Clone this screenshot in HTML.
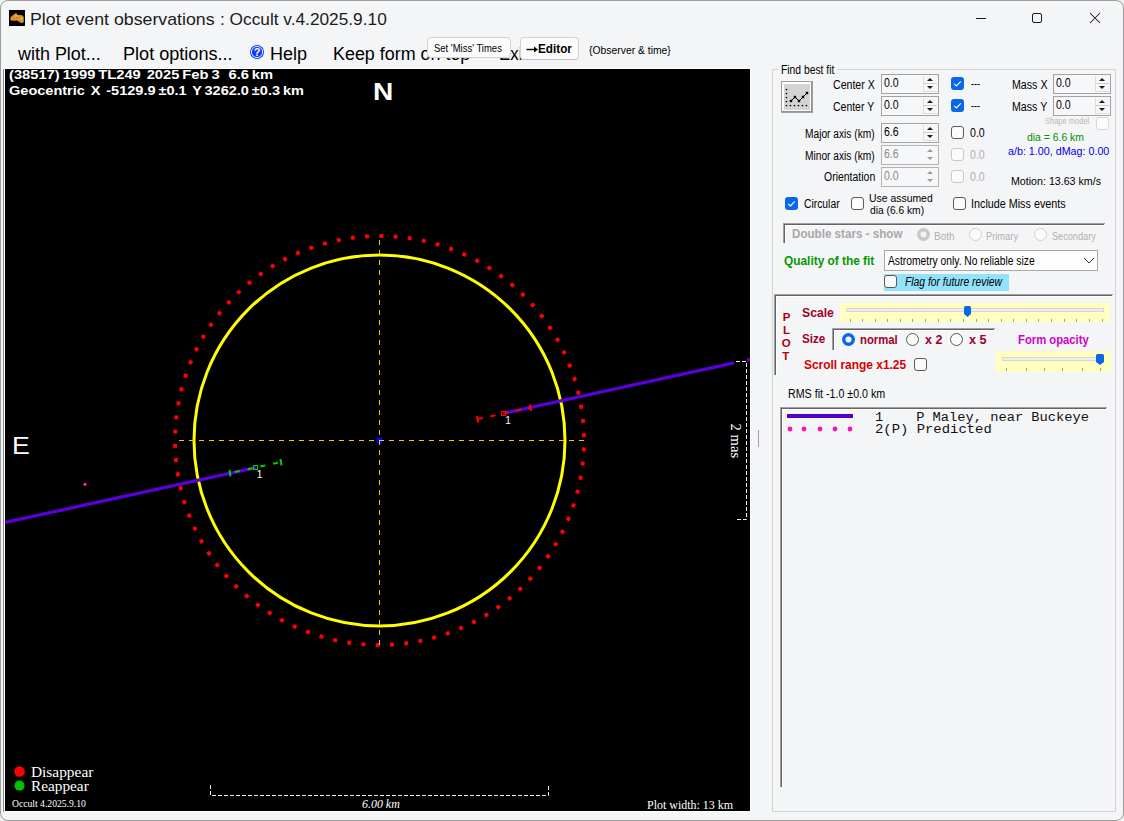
<!DOCTYPE html><html><head><meta charset="utf-8"><style>html,body{margin:0;padding:0;overflow:hidden}body{width:1124px;height:821px;position:relative;background:#f0f0f0}</style></head><body>
<div style="position:absolute;left:0;top:0;width:1124px;height:821px;box-sizing:border-box;border:1px solid #9c9c9c;border-radius:8px;background:#f4f5f7"></div>
<svg style="position:absolute;left:9px;top:10px" width="16" height="16"><rect width="16" height="16" fill="#000"/><path d="M1.2 8.2 Q2 6.5 3.9 5.3 Q5.5 4 7 3.1 Q8 3.5 8.5 5.1 Q10 4.8 11.7 5.1 Q13.3 5.2 13.9 5.8 Q14.8 6.8 14.8 7.8 L14.8 11.9 Q14.2 12.9 13.1 12.9 Q12 12.9 11.2 12.6 Q10.2 11.9 9.5 11.2 Q8.5 10.5 7.8 10.4 Q6 10.6 4.1 10.7 Q2 10.6 1.4 10.2 Z" fill="#d4922c"/><ellipse cx="7.5" cy="6.5" rx="2.5" ry="1.8" fill="#e0aa30"/><circle cx="7.5" cy="7.5" r="0.8" fill="#ff4a18"/><circle cx="12.4" cy="8.5" r="0.9" fill="#c8d838"/></svg>
<div style="position:absolute;left:976px;top:18px;width:10px;height:1px;background:#1a1a1a"></div>
<svg style="position:absolute;left:1031px;top:12px" width="12" height="12"><rect x="1.5" y="1.5" width="9" height="9" rx="1.5" fill="none" stroke="#1a1a1a" stroke-width="1"/></svg>
<svg style="position:absolute;left:1089px;top:12px" width="12" height="12"><path d="M1 1 L11 11 M11 1 L1 11" stroke="#1a1a1a" stroke-width="1.05"/></svg>
<svg style="position:absolute;left:249px;top:44px" width="16" height="16"><circle cx="8" cy="8" r="7" fill="#0a3cf0"/><circle cx="8" cy="8" r="5.6" fill="none" stroke="#fff" stroke-width="0.9"/><text x="8" y="12" text-anchor="middle" font-family="Liberation Sans" font-weight="700" font-size="11" fill="#fff">?</text></svg>
<div style="position:absolute;left:3px;top:69px;width:1px;height:743px;background:#8a8a8a"></div>
<div style="position:absolute;left:4px;top:68px;width:747px;height:744px;background:#ffffff"></div>
<svg style="position:absolute;left:5px;top:69px" width="745" height="742" viewBox="5 69 745 742">
<rect x="5" y="69" width="745" height="742" fill="#000"/>
<circle cx="379.5" cy="440.5" r="185.5" fill="none" stroke="#ffff00" stroke-width="3"/>
<rect x="-2" y="-2" width="4" height="4" rx="0.9" fill="#ff0000" transform="translate(583.81 449.42) rotate(2.5)"/>
<rect x="-2" y="-2" width="4" height="4" rx="0.9" fill="#ff0000" transform="translate(582.69 463.65) rotate(6.5)"/>
<rect x="-2" y="-2" width="4" height="4" rx="0.9" fill="#ff0000" transform="translate(580.58 477.77) rotate(10.5)"/>
<rect x="-2" y="-2" width="4" height="4" rx="0.9" fill="#ff0000" transform="translate(577.49 491.70) rotate(14.5)"/>
<rect x="-2" y="-2" width="4" height="4" rx="0.9" fill="#ff0000" transform="translate(573.43 505.39) rotate(18.5)"/>
<rect x="-2" y="-2" width="4" height="4" rx="0.9" fill="#ff0000" transform="translate(568.43 518.76) rotate(22.5)"/>
<rect x="-2" y="-2" width="4" height="4" rx="0.9" fill="#ff0000" transform="translate(562.51 531.75) rotate(26.5)"/>
<rect x="-2" y="-2" width="4" height="4" rx="0.9" fill="#ff0000" transform="translate(555.70 544.29) rotate(30.5)"/>
<rect x="-2" y="-2" width="4" height="4" rx="0.9" fill="#ff0000" transform="translate(548.03 556.33) rotate(34.5)"/>
<rect x="-2" y="-2" width="4" height="4" rx="0.9" fill="#ff0000" transform="translate(539.54 567.80) rotate(38.5)"/>
<rect x="-2" y="-2" width="4" height="4" rx="0.9" fill="#ff0000" transform="translate(530.27 578.66) rotate(42.5)"/>
<rect x="-2" y="-2" width="4" height="4" rx="0.9" fill="#ff0000" transform="translate(520.27 588.84) rotate(46.5)"/>
<rect x="-2" y="-2" width="4" height="4" rx="0.9" fill="#ff0000" transform="translate(509.58 598.30) rotate(50.5)"/>
<rect x="-2" y="-2" width="4" height="4" rx="0.9" fill="#ff0000" transform="translate(498.25 606.99) rotate(54.5)"/>
<rect x="-2" y="-2" width="4" height="4" rx="0.9" fill="#ff0000" transform="translate(486.35 614.86) rotate(58.5)"/>
<rect x="-2" y="-2" width="4" height="4" rx="0.9" fill="#ff0000" transform="translate(473.93 621.89) rotate(62.5)"/>
<rect x="-2" y="-2" width="4" height="4" rx="0.9" fill="#ff0000" transform="translate(461.04 628.04) rotate(66.5)"/>
<rect x="-2" y="-2" width="4" height="4" rx="0.9" fill="#ff0000" transform="translate(447.76 633.27) rotate(70.5)"/>
<rect x="-2" y="-2" width="4" height="4" rx="0.9" fill="#ff0000" transform="translate(434.15 637.56) rotate(74.5)"/>
<rect x="-2" y="-2" width="4" height="4" rx="0.9" fill="#ff0000" transform="translate(420.27 640.89) rotate(78.5)"/>
<rect x="-2" y="-2" width="4" height="4" rx="0.9" fill="#ff0000" transform="translate(406.19 643.25) rotate(82.5)"/>
<rect x="-2" y="-2" width="4" height="4" rx="0.9" fill="#ff0000" transform="translate(391.98 644.62) rotate(86.5)"/>
<rect x="-2" y="-2" width="4" height="4" rx="0.9" fill="#ff0000" transform="translate(377.72 644.99) rotate(90.5)"/>
<rect x="-2" y="-2" width="4" height="4" rx="0.9" fill="#ff0000" transform="translate(363.46 644.37) rotate(94.5)"/>
<rect x="-2" y="-2" width="4" height="4" rx="0.9" fill="#ff0000" transform="translate(349.27 642.75) rotate(98.5)"/>
<rect x="-2" y="-2" width="4" height="4" rx="0.9" fill="#ff0000" transform="translate(335.24 640.15) rotate(102.5)"/>
<rect x="-2" y="-2" width="4" height="4" rx="0.9" fill="#ff0000" transform="translate(321.42 636.58) rotate(106.5)"/>
<rect x="-2" y="-2" width="4" height="4" rx="0.9" fill="#ff0000" transform="translate(307.88 632.05) rotate(110.5)"/>
<rect x="-2" y="-2" width="4" height="4" rx="0.9" fill="#ff0000" transform="translate(294.70 626.59) rotate(114.5)"/>
<rect x="-2" y="-2" width="4" height="4" rx="0.9" fill="#ff0000" transform="translate(281.92 620.22) rotate(118.5)"/>
<rect x="-2" y="-2" width="4" height="4" rx="0.9" fill="#ff0000" transform="translate(269.62 612.97) rotate(122.5)"/>
<rect x="-2" y="-2" width="4" height="4" rx="0.9" fill="#ff0000" transform="translate(257.86 604.89) rotate(126.5)"/>
<rect x="-2" y="-2" width="4" height="4" rx="0.9" fill="#ff0000" transform="translate(246.69 596.00) rotate(130.5)"/>
<rect x="-2" y="-2" width="4" height="4" rx="0.9" fill="#ff0000" transform="translate(236.16 586.36) rotate(134.5)"/>
<rect x="-2" y="-2" width="4" height="4" rx="0.9" fill="#ff0000" transform="translate(226.34 576.01) rotate(138.5)"/>
<rect x="-2" y="-2" width="4" height="4" rx="0.9" fill="#ff0000" transform="translate(217.26 564.99) rotate(142.5)"/>
<rect x="-2" y="-2" width="4" height="4" rx="0.9" fill="#ff0000" transform="translate(208.97 553.37) rotate(146.5)"/>
<rect x="-2" y="-2" width="4" height="4" rx="0.9" fill="#ff0000" transform="translate(201.51 541.20) rotate(150.5)"/>
<rect x="-2" y="-2" width="4" height="4" rx="0.9" fill="#ff0000" transform="translate(194.92 528.54) rotate(154.5)"/>
<rect x="-2" y="-2" width="4" height="4" rx="0.9" fill="#ff0000" transform="translate(189.23 515.45) rotate(158.5)"/>
<rect x="-2" y="-2" width="4" height="4" rx="0.9" fill="#ff0000" transform="translate(184.46 501.99) rotate(162.5)"/>
<rect x="-2" y="-2" width="4" height="4" rx="0.9" fill="#ff0000" transform="translate(180.65 488.24) rotate(166.5)"/>
<rect x="-2" y="-2" width="4" height="4" rx="0.9" fill="#ff0000" transform="translate(177.80 474.25) rotate(170.5)"/>
<rect x="-2" y="-2" width="4" height="4" rx="0.9" fill="#ff0000" transform="translate(175.94 460.10) rotate(174.5)"/>
<rect x="-2" y="-2" width="4" height="4" rx="0.9" fill="#ff0000" transform="translate(175.07 445.85) rotate(178.5)"/>
<rect x="-2" y="-2" width="4" height="4" rx="0.9" fill="#ff0000" transform="translate(175.19 431.58) rotate(182.5)"/>
<rect x="-2" y="-2" width="4" height="4" rx="0.9" fill="#ff0000" transform="translate(176.31 417.35) rotate(186.5)"/>
<rect x="-2" y="-2" width="4" height="4" rx="0.9" fill="#ff0000" transform="translate(178.42 403.23) rotate(190.5)"/>
<rect x="-2" y="-2" width="4" height="4" rx="0.9" fill="#ff0000" transform="translate(181.51 389.30) rotate(194.5)"/>
<rect x="-2" y="-2" width="4" height="4" rx="0.9" fill="#ff0000" transform="translate(185.57 375.61) rotate(198.5)"/>
<rect x="-2" y="-2" width="4" height="4" rx="0.9" fill="#ff0000" transform="translate(190.57 362.24) rotate(202.5)"/>
<rect x="-2" y="-2" width="4" height="4" rx="0.9" fill="#ff0000" transform="translate(196.49 349.25) rotate(206.5)"/>
<rect x="-2" y="-2" width="4" height="4" rx="0.9" fill="#ff0000" transform="translate(203.30 336.71) rotate(210.5)"/>
<rect x="-2" y="-2" width="4" height="4" rx="0.9" fill="#ff0000" transform="translate(210.97 324.67) rotate(214.5)"/>
<rect x="-2" y="-2" width="4" height="4" rx="0.9" fill="#ff0000" transform="translate(219.46 313.20) rotate(218.5)"/>
<rect x="-2" y="-2" width="4" height="4" rx="0.9" fill="#ff0000" transform="translate(228.73 302.34) rotate(222.5)"/>
<rect x="-2" y="-2" width="4" height="4" rx="0.9" fill="#ff0000" transform="translate(238.73 292.16) rotate(226.5)"/>
<rect x="-2" y="-2" width="4" height="4" rx="0.9" fill="#ff0000" transform="translate(249.42 282.70) rotate(230.5)"/>
<rect x="-2" y="-2" width="4" height="4" rx="0.9" fill="#ff0000" transform="translate(260.75 274.01) rotate(234.5)"/>
<rect x="-2" y="-2" width="4" height="4" rx="0.9" fill="#ff0000" transform="translate(272.65 266.14) rotate(238.5)"/>
<rect x="-2" y="-2" width="4" height="4" rx="0.9" fill="#ff0000" transform="translate(285.07 259.11) rotate(242.5)"/>
<rect x="-2" y="-2" width="4" height="4" rx="0.9" fill="#ff0000" transform="translate(297.96 252.96) rotate(246.5)"/>
<rect x="-2" y="-2" width="4" height="4" rx="0.9" fill="#ff0000" transform="translate(311.24 247.73) rotate(250.5)"/>
<rect x="-2" y="-2" width="4" height="4" rx="0.9" fill="#ff0000" transform="translate(324.85 243.44) rotate(254.5)"/>
<rect x="-2" y="-2" width="4" height="4" rx="0.9" fill="#ff0000" transform="translate(338.73 240.11) rotate(258.5)"/>
<rect x="-2" y="-2" width="4" height="4" rx="0.9" fill="#ff0000" transform="translate(352.81 237.75) rotate(262.5)"/>
<rect x="-2" y="-2" width="4" height="4" rx="0.9" fill="#ff0000" transform="translate(367.02 236.38) rotate(266.5)"/>
<rect x="-2" y="-2" width="4" height="4" rx="0.9" fill="#ff0000" transform="translate(381.28 236.01) rotate(270.5)"/>
<rect x="-2" y="-2" width="4" height="4" rx="0.9" fill="#ff0000" transform="translate(395.54 236.63) rotate(274.5)"/>
<rect x="-2" y="-2" width="4" height="4" rx="0.9" fill="#ff0000" transform="translate(409.73 238.25) rotate(278.5)"/>
<rect x="-2" y="-2" width="4" height="4" rx="0.9" fill="#ff0000" transform="translate(423.76 240.85) rotate(282.5)"/>
<rect x="-2" y="-2" width="4" height="4" rx="0.9" fill="#ff0000" transform="translate(437.58 244.42) rotate(286.5)"/>
<rect x="-2" y="-2" width="4" height="4" rx="0.9" fill="#ff0000" transform="translate(451.12 248.95) rotate(290.5)"/>
<rect x="-2" y="-2" width="4" height="4" rx="0.9" fill="#ff0000" transform="translate(464.30 254.41) rotate(294.5)"/>
<rect x="-2" y="-2" width="4" height="4" rx="0.9" fill="#ff0000" transform="translate(477.08 260.78) rotate(298.5)"/>
<rect x="-2" y="-2" width="4" height="4" rx="0.9" fill="#ff0000" transform="translate(489.38 268.03) rotate(302.5)"/>
<rect x="-2" y="-2" width="4" height="4" rx="0.9" fill="#ff0000" transform="translate(501.14 276.11) rotate(306.5)"/>
<rect x="-2" y="-2" width="4" height="4" rx="0.9" fill="#ff0000" transform="translate(512.31 285.00) rotate(310.5)"/>
<rect x="-2" y="-2" width="4" height="4" rx="0.9" fill="#ff0000" transform="translate(522.84 294.64) rotate(314.5)"/>
<rect x="-2" y="-2" width="4" height="4" rx="0.9" fill="#ff0000" transform="translate(532.66 304.99) rotate(318.5)"/>
<rect x="-2" y="-2" width="4" height="4" rx="0.9" fill="#ff0000" transform="translate(541.74 316.01) rotate(322.5)"/>
<rect x="-2" y="-2" width="4" height="4" rx="0.9" fill="#ff0000" transform="translate(550.03 327.63) rotate(326.5)"/>
<rect x="-2" y="-2" width="4" height="4" rx="0.9" fill="#ff0000" transform="translate(557.49 339.80) rotate(330.5)"/>
<rect x="-2" y="-2" width="4" height="4" rx="0.9" fill="#ff0000" transform="translate(564.08 352.46) rotate(334.5)"/>
<rect x="-2" y="-2" width="4" height="4" rx="0.9" fill="#ff0000" transform="translate(569.77 365.55) rotate(338.5)"/>
<rect x="-2" y="-2" width="4" height="4" rx="0.9" fill="#ff0000" transform="translate(574.54 379.01) rotate(342.5)"/>
<rect x="-2" y="-2" width="4" height="4" rx="0.9" fill="#ff0000" transform="translate(578.35 392.76) rotate(346.5)"/>
<rect x="-2" y="-2" width="4" height="4" rx="0.9" fill="#ff0000" transform="translate(581.20 406.75) rotate(350.5)"/>
<rect x="-2" y="-2" width="4" height="4" rx="0.9" fill="#ff0000" transform="translate(583.06 420.90) rotate(354.5)"/>
<rect x="-2" y="-2" width="4" height="4" rx="0.9" fill="#ff0000" transform="translate(583.93 435.15) rotate(358.5)"/>
<circle cx="379.5" cy="440.5" r="3.2" fill="#0000ff"/>
<line x1="179" y1="440.5" x2="585" y2="440.5" stroke="#ffc400" stroke-width="1" stroke-dasharray="5 5"/>
<line x1="379.5" y1="240" x2="379.5" y2="646" stroke="#ffc400" stroke-width="1" stroke-dasharray="5 5"/>
<line x1="5" y1="522.45" x2="256" y2="467.51" stroke="#5a00d8" stroke-width="3.3"/>
<line x1="505" y1="413.00" x2="734" y2="362.87" stroke="#5a00d8" stroke-width="3.3"/>
<line x1="747" y1="360.03" x2="750" y2="359.37" stroke="#5a00d8" stroke-width="3.3"/>
<line x1="477.5" y1="419.1" x2="530" y2="407.8" stroke="#ff0000" stroke-width="2" stroke-dasharray="5.5 7.5"/>
<line x1="477" y1="416" x2="478" y2="422.5" stroke="#ff0000" stroke-width="2"/>
<line x1="530" y1="404.5" x2="531" y2="411" stroke="#ff0000" stroke-width="2"/>
<rect x="501.5" y="411.5" width="4" height="4" fill="none" stroke="#ff0000" stroke-width="1"/>
<line x1="230" y1="473" x2="281" y2="462" stroke="#00d000" stroke-width="2" stroke-dasharray="5 8" stroke-dashoffset="8"/>
<line x1="229.5" y1="470" x2="230.5" y2="476.5" stroke="#00d000" stroke-width="2"/>
<line x1="280.5" y1="459" x2="281.5" y2="465.5" stroke="#00d000" stroke-width="2"/>
<rect x="253.5" y="465.5" width="4" height="4" fill="none" stroke="#00d000" stroke-width="1"/>
<circle cx="85" cy="484.3" r="1.6" fill="#ff20b0"/>
<path d="M736 361.5 H746.5 V519.5 H736" fill="none" stroke="#f0f0f0" stroke-width="1" stroke-dasharray="4 2"/>
<path d="M210.5 785 V795.5 H548.5 V785" fill="none" stroke="#f0f0f0" stroke-width="1" stroke-dasharray="4 2"/>
<circle cx="19.5" cy="771.5" r="5.3" fill="#ff0000"/>
<circle cx="19.5" cy="785.7" r="5.1" fill="#00c000"/>
<text x="0" y="0" transform="translate(730.4,423.6) rotate(90)" font-family="Liberation Serif" font-size="15" fill="#fff" textLength="34.5" lengthAdjust="spacingAndGlyphs" dominant-baseline="alphabetic" dy="-1">2 mas</text>
</svg>
<div style="position:absolute;left:758px;top:430px;width:1px;height:17px;background:#a0a0a0"></div>
<div style="position:absolute;left:427px;top:37px;width:84px;height:21px;z-index:2;box-sizing:border-box;border:1px solid #d2d2d2;border-radius:4px;background:#fbfbfb"></div>
<div style="position:absolute;left:520px;top:37px;width:59px;height:23px;z-index:2;box-sizing:border-box;border:1px solid #d2d2d2;border-radius:4px;background:#fbfbfb;border-bottom-color:#c0c0c0"></div>
<svg style="position:absolute;left:524px;top:44px;z-index:3" width="16" height="11"><path d="M2.5 5.5 H11" stroke="#000" stroke-width="1.4"/><path d="M10 2.6 L14 5.5 L10 8.4 Z" fill="#000"/></svg>
<div style="position:absolute;left:772px;top:69px;width:344px;height:743px;box-sizing:border-box;border:1px solid #d3d3d3"></div>
<div style="position:absolute;left:778px;top:65px;width:59px;height:10px;background:#f4f5f7"></div>
<svg style="position:absolute;left:781px;top:81px" width="32" height="32"><rect x="0" y="0" width="32" height="32" fill="#a0a0a0"/><rect x="1" y="1" width="30" height="30" fill="#909090"/><rect x="1" y="1" width="29" height="29" fill="#ffffff"/><rect x="3" y="3" width="26" height="26" fill="#d4d4d4"/><circle cx="5.5" cy="8.5" r="0.85" fill="#000"/><circle cx="5.5" cy="12.5" r="0.85" fill="#000"/><circle cx="5.5" cy="16.5" r="0.85" fill="#000"/><circle cx="5.5" cy="20.5" r="0.85" fill="#000"/><circle cx="5.5" cy="24.5" r="0.85" fill="#000"/><circle cx="9.5" cy="24.5" r="0.85" fill="#000"/><circle cx="13.5" cy="24.5" r="0.85" fill="#000"/><circle cx="17.5" cy="24.5" r="0.85" fill="#000"/><circle cx="21.5" cy="24.5" r="0.85" fill="#000"/><circle cx="25.5" cy="24.5" r="0.85" fill="#000"/><path d="M10 20 L14 16 L18 20 L22 16 L26 12" fill="none" stroke="#000" stroke-width="1"/><rect x="8.8" y="18.8" width="2.4" height="2.4" fill="#000"/><rect x="12.8" y="14.8" width="2.4" height="2.4" fill="#000"/><rect x="16.8" y="18.8" width="2.4" height="2.4" fill="#000"/><rect x="20.8" y="14.8" width="2.4" height="2.4" fill="#000"/><rect x="24.8" y="10.8" width="2.4" height="2.4" fill="#000"/></svg>
<div style="position:absolute;left:881px;top:74px;width:58px;height:20px;box-sizing:border-box;border:1px solid #a3a3a3;background:#f6f7f9"></div><div style="position:absolute;left:923px;top:76px;width:1px;height:16px;background:#dcdcdc"></div><div style="position:absolute;left:923px;top:83px;width:14px;height:1px;background:#cfcfcf"></div><div style="position:absolute;left:924px;top:91px;width:13px;height:1px;background:#dcdcdc"></div><svg style="position:absolute;left:923px;top:76px" width="14" height="16"><path d="M4 5 L7 2 L10 5Z" fill="#1a1a1a"/><path d="M4 10 L7 13 L10 10Z" fill="#1a1a1a"/></svg>
<div style="position:absolute;left:881px;top:96px;width:58px;height:20px;box-sizing:border-box;border:1px solid #a3a3a3;background:#f6f7f9"></div><div style="position:absolute;left:923px;top:98px;width:1px;height:16px;background:#dcdcdc"></div><div style="position:absolute;left:923px;top:105px;width:14px;height:1px;background:#cfcfcf"></div><div style="position:absolute;left:924px;top:113px;width:13px;height:1px;background:#dcdcdc"></div><svg style="position:absolute;left:923px;top:98px" width="14" height="16"><path d="M4 5 L7 2 L10 5Z" fill="#1a1a1a"/><path d="M4 10 L7 13 L10 10Z" fill="#1a1a1a"/></svg>
<div style="position:absolute;left:881px;top:123px;width:58px;height:20px;box-sizing:border-box;border:1px solid #a3a3a3;background:#f6f7f9"></div><div style="position:absolute;left:923px;top:125px;width:1px;height:16px;background:#dcdcdc"></div><div style="position:absolute;left:923px;top:132px;width:14px;height:1px;background:#cfcfcf"></div><div style="position:absolute;left:924px;top:140px;width:13px;height:1px;background:#dcdcdc"></div><svg style="position:absolute;left:923px;top:125px" width="14" height="16"><path d="M4 5 L7 2 L10 5Z" fill="#1a1a1a"/><path d="M4 10 L7 13 L10 10Z" fill="#1a1a1a"/></svg>
<div style="position:absolute;left:881px;top:145px;width:58px;height:20px;box-sizing:border-box;border:1px solid #b4b4b4;background:#f6f7f9"></div><svg style="position:absolute;left:923px;top:147px" width="14" height="16"><path d="M4 5 L7 2 L10 5Z" fill="#9c9c9c"/><path d="M4 10 L7 13 L10 10Z" fill="#9c9c9c"/></svg>
<div style="position:absolute;left:881px;top:167px;width:58px;height:20px;box-sizing:border-box;border:1px solid #b4b4b4;background:#f6f7f9"></div><svg style="position:absolute;left:923px;top:169px" width="14" height="16"><path d="M4 5 L7 2 L10 5Z" fill="#9c9c9c"/><path d="M4 10 L7 13 L10 10Z" fill="#9c9c9c"/></svg>
<div style="position:absolute;left:1053px;top:74px;width:58px;height:20px;box-sizing:border-box;border:1px solid #a3a3a3;background:#f6f7f9"></div><div style="position:absolute;left:1095px;top:76px;width:1px;height:16px;background:#dcdcdc"></div><div style="position:absolute;left:1095px;top:83px;width:14px;height:1px;background:#cfcfcf"></div><div style="position:absolute;left:1096px;top:91px;width:13px;height:1px;background:#dcdcdc"></div><svg style="position:absolute;left:1095px;top:76px" width="14" height="16"><path d="M4 5 L7 2 L10 5Z" fill="#1a1a1a"/><path d="M4 10 L7 13 L10 10Z" fill="#1a1a1a"/></svg>
<div style="position:absolute;left:1053px;top:96px;width:58px;height:20px;box-sizing:border-box;border:1px solid #a3a3a3;background:#f6f7f9"></div><div style="position:absolute;left:1095px;top:98px;width:1px;height:16px;background:#dcdcdc"></div><div style="position:absolute;left:1095px;top:105px;width:14px;height:1px;background:#cfcfcf"></div><div style="position:absolute;left:1096px;top:113px;width:13px;height:1px;background:#dcdcdc"></div><svg style="position:absolute;left:1095px;top:98px" width="14" height="16"><path d="M4 5 L7 2 L10 5Z" fill="#1a1a1a"/><path d="M4 10 L7 13 L10 10Z" fill="#1a1a1a"/></svg>
<svg style="position:absolute;left:951px;top:77px" width="13" height="13"><rect x="0" y="0" width="13" height="13" rx="3" fill="#0a67e8"/><path d="M3.2 6.8 L5.4 9 L9.8 4.4" fill="none" stroke="#fff" stroke-width="1.1"/></svg>
<svg style="position:absolute;left:951px;top:99px" width="13" height="13"><rect x="0" y="0" width="13" height="13" rx="3" fill="#0a67e8"/><path d="M3.2 6.8 L5.4 9 L9.8 4.4" fill="none" stroke="#fff" stroke-width="1.1"/></svg>
<svg style="position:absolute;left:951px;top:126px" width="13" height="13"><rect x="0.5" y="0.5" width="12" height="12" rx="2.5" fill="#fbfbfb" stroke="#5a5a5a" stroke-width="1"/></svg>
<svg style="position:absolute;left:951px;top:148px" width="13" height="13"><rect x="0.5" y="0.5" width="12" height="12" rx="2.5" fill="#fbfbfb" stroke="#c9c9c9" stroke-width="1"/></svg>
<svg style="position:absolute;left:951px;top:170px" width="13" height="13"><rect x="0.5" y="0.5" width="12" height="12" rx="2.5" fill="#fbfbfb" stroke="#c9c9c9" stroke-width="1"/></svg>
<svg style="position:absolute;left:1096px;top:117px" width="13" height="13"><rect x="0.5" y="0.5" width="12" height="12" rx="2.5" fill="#fbfbfb" stroke="#d8d8d8" stroke-width="1"/></svg>
<svg style="position:absolute;left:785px;top:197px" width="13" height="13"><rect x="0" y="0" width="13" height="13" rx="3" fill="#0a67e8"/><path d="M3.2 6.8 L5.4 9 L9.8 4.4" fill="none" stroke="#fff" stroke-width="1.1"/></svg>
<svg style="position:absolute;left:851px;top:197px" width="13" height="13"><rect x="0.5" y="0.5" width="12" height="12" rx="2.5" fill="#fbfbfb" stroke="#5a5a5a" stroke-width="1"/></svg>
<svg style="position:absolute;left:953px;top:197px" width="13" height="13"><rect x="0.5" y="0.5" width="12" height="12" rx="2.5" fill="#fbfbfb" stroke="#5a5a5a" stroke-width="1"/></svg>
<div style="position:absolute;left:783px;top:223px;width:322px;height:1px;background:#a0a0a0"></div><div style="position:absolute;left:783px;top:223px;width:1px;height:20px;background:#a0a0a0"></div><div style="position:absolute;left:784px;top:224px;width:320px;height:1px;background:#646464"></div><div style="position:absolute;left:784px;top:224px;width:1px;height:19px;background:#646464"></div><div style="position:absolute;left:785px;top:225px;width:318px;height:1px;background:#ffffff"></div><div style="position:absolute;left:785px;top:225px;width:1px;height:18px;background:#ffffff"></div>
<svg style="position:absolute;left:917px;top:228px" width="13" height="13"><circle cx="6.5" cy="6.5" r="6.5" fill="#c8c8c8"/><circle cx="6.5" cy="6.5" r="3" fill="#f4f4f4"/></svg>
<svg style="position:absolute;left:969px;top:228px" width="13" height="13"><circle cx="6.5" cy="6.5" r="6" fill="#fbfbfb" stroke="#cdcdcd" stroke-width="1"/></svg>
<svg style="position:absolute;left:1034px;top:228px" width="13" height="13"><circle cx="6.5" cy="6.5" r="6" fill="#fbfbfb" stroke="#cdcdcd" stroke-width="1"/></svg>
<div style="position:absolute;left:884px;top:250px;width:214px;height:21px;box-sizing:border-box;border:1px solid #a8a8a8;background:#fdfdfd"></div>
<svg style="position:absolute;left:1082px;top:255px" width="14" height="10"><path d="M2 3 L7 8 L12 3" fill="none" stroke="#333" stroke-width="1"/></svg>
<div style="position:absolute;left:884px;top:274px;width:125px;height:17px;background:#92e2fc"></div>
<svg style="position:absolute;left:884px;top:275px" width="13" height="13"><rect x="0.5" y="0.5" width="12" height="12" rx="2.5" fill="#fbfbfb" stroke="#5a5a5a" stroke-width="1"/></svg>
<div style="position:absolute;left:774px;top:294px;width:339px;height:1px;background:#a0a0a0"></div><div style="position:absolute;left:774px;top:294px;width:1px;height:81px;background:#a0a0a0"></div><div style="position:absolute;left:775px;top:295px;width:337px;height:1px;background:#646464"></div><div style="position:absolute;left:775px;top:295px;width:1px;height:80px;background:#646464"></div><div style="position:absolute;left:776px;top:296px;width:335px;height:1px;background:#ffffff"></div><div style="position:absolute;left:776px;top:296px;width:1px;height:79px;background:#ffffff"></div>
<div style="position:absolute;left:840px;top:303px;width:270px;height:19px;background:#ffffc0"></div><div style="position:absolute;left:846px;top:308px;width:258px;height:4px;box-sizing:border-box;border:1px solid #d6d6d6;background:#eeeeee"></div><div style="position:absolute;left:850px;top:319px;width:1px;height:3px;background:#a0a0a0"></div><div style="position:absolute;left:862px;top:319px;width:1px;height:3px;background:#a0a0a0"></div><div style="position:absolute;left:875px;top:319px;width:1px;height:3px;background:#a0a0a0"></div><div style="position:absolute;left:887px;top:319px;width:1px;height:3px;background:#a0a0a0"></div><div style="position:absolute;left:900px;top:319px;width:1px;height:3px;background:#a0a0a0"></div><div style="position:absolute;left:912px;top:319px;width:1px;height:3px;background:#a0a0a0"></div><div style="position:absolute;left:925px;top:319px;width:1px;height:3px;background:#a0a0a0"></div><div style="position:absolute;left:938px;top:319px;width:1px;height:3px;background:#a0a0a0"></div><div style="position:absolute;left:950px;top:319px;width:1px;height:3px;background:#a0a0a0"></div><div style="position:absolute;left:963px;top:319px;width:1px;height:3px;background:#a0a0a0"></div><div style="position:absolute;left:976px;top:319px;width:1px;height:3px;background:#a0a0a0"></div><div style="position:absolute;left:988px;top:319px;width:1px;height:3px;background:#a0a0a0"></div><div style="position:absolute;left:1001px;top:319px;width:1px;height:3px;background:#a0a0a0"></div><div style="position:absolute;left:1013px;top:319px;width:1px;height:3px;background:#a0a0a0"></div><div style="position:absolute;left:1026px;top:319px;width:1px;height:3px;background:#a0a0a0"></div><div style="position:absolute;left:1038px;top:319px;width:1px;height:3px;background:#a0a0a0"></div><div style="position:absolute;left:1051px;top:319px;width:1px;height:3px;background:#a0a0a0"></div><div style="position:absolute;left:1064px;top:319px;width:1px;height:3px;background:#a0a0a0"></div><div style="position:absolute;left:1076px;top:319px;width:1px;height:3px;background:#a0a0a0"></div><div style="position:absolute;left:1089px;top:319px;width:1px;height:3px;background:#a0a0a0"></div><div style="position:absolute;left:1102px;top:319px;width:1px;height:3px;background:#a0a0a0"></div><svg style="position:absolute;left:964px;top:306px" width="7" height="12"><path d="M0 1.5 Q0 0 1.5 0 H5.5 Q7 0 7 1.5 V8 L3.5 11 L0 8 Z" fill="#0a67e8"/></svg>
<div style="position:absolute;left:832px;top:328px;width:163px;height:1px;background:#a0a0a0"></div><div style="position:absolute;left:832px;top:328px;width:1px;height:22px;background:#a0a0a0"></div><div style="position:absolute;left:833px;top:329px;width:161px;height:1px;background:#646464"></div><div style="position:absolute;left:833px;top:329px;width:1px;height:21px;background:#646464"></div><div style="position:absolute;left:834px;top:330px;width:159px;height:1px;background:#ffffff"></div><div style="position:absolute;left:834px;top:330px;width:1px;height:20px;background:#ffffff"></div>
<svg style="position:absolute;left:842px;top:333px" width="13" height="13"><circle cx="6.5" cy="6.5" r="6.5" fill="#0a67e8"/><circle cx="6.5" cy="6.5" r="3" fill="#fff"/></svg>
<svg style="position:absolute;left:906px;top:333px" width="13" height="13"><circle cx="6.5" cy="6.5" r="6" fill="#fbfbfb" stroke="#5a5a5a" stroke-width="1"/></svg>
<svg style="position:absolute;left:950px;top:333px" width="13" height="13"><circle cx="6.5" cy="6.5" r="6" fill="#fbfbfb" stroke="#5a5a5a" stroke-width="1"/></svg>
<div style="position:absolute;left:996px;top:351px;width:115px;height:21px;background:#ffffc0"></div><div style="position:absolute;left:1002px;top:357px;width:102px;height:4px;box-sizing:border-box;border:1px solid #d6d6d6;background:#eeeeee"></div><div style="position:absolute;left:1006px;top:368px;width:1px;height:3px;background:#a0a0a0"></div><div style="position:absolute;left:1026px;top:368px;width:1px;height:3px;background:#a0a0a0"></div><div style="position:absolute;left:1044px;top:368px;width:1px;height:3px;background:#a0a0a0"></div><div style="position:absolute;left:1062px;top:368px;width:1px;height:3px;background:#a0a0a0"></div><div style="position:absolute;left:1082px;top:368px;width:1px;height:3px;background:#a0a0a0"></div><div style="position:absolute;left:1100px;top:368px;width:1px;height:3px;background:#a0a0a0"></div><svg style="position:absolute;left:1096px;top:354px" width="8" height="12"><path d="M0 1.5 Q0 0 1.5 0 H6.5 Q8 0 8 1.5 V8 L4.0 11 L0 8 Z" fill="#0a67e8"/></svg>
<svg style="position:absolute;left:914px;top:358px" width="13" height="13"><rect x="0.5" y="0.5" width="12" height="12" rx="2.5" fill="#fbfbfb" stroke="#5a5a5a" stroke-width="1"/></svg>
<div style="position:absolute;left:780px;top:407px;width:327px;height:1px;background:#a0a0a0"></div><div style="position:absolute;left:780px;top:407px;width:1px;height:380px;background:#a0a0a0"></div><div style="position:absolute;left:781px;top:408px;width:325px;height:1px;background:#646464"></div><div style="position:absolute;left:781px;top:408px;width:1px;height:379px;background:#646464"></div><div style="position:absolute;left:782px;top:409px;width:323px;height:1px;background:#ffffff"></div><div style="position:absolute;left:782px;top:409px;width:1px;height:378px;background:#ffffff"></div>
<div style="position:absolute;left:787px;top:414px;width:66px;height:4px;background:#5000c8"></div>
<svg style="position:absolute;left:786.5px;top:426px" width="6" height="6"><circle cx="3" cy="3" r="2.4" fill="#ff10b4"/></svg>
<svg style="position:absolute;left:801.4px;top:426px" width="6" height="6"><circle cx="3" cy="3" r="2.4" fill="#ff10b4"/></svg>
<svg style="position:absolute;left:816.6px;top:426px" width="6" height="6"><circle cx="3" cy="3" r="2.4" fill="#ff10b4"/></svg>
<svg style="position:absolute;left:831.5px;top:426px" width="6" height="6"><circle cx="3" cy="3" r="2.4" fill="#ff10b4"/></svg>
<svg style="position:absolute;left:846.6px;top:426px" width="6" height="6"><circle cx="3" cy="3" r="2.4" fill="#ff10b4"/></svg>
<div id="t0" style="position:absolute;left:29.96px;top:10.50px;font-family:'Liberation Sans', sans-serif;font-size:17px;font-weight:400;font-style:normal;color:#1b1b1b;line-height:1;white-space:pre;transform:scaleX(1.0443);transform-origin:0 0;">Plot event observations</div>
<div id="t1" style="position:absolute;left:219.98px;top:10.50px;font-family:'Liberation Sans', sans-serif;font-size:17px;font-weight:400;font-style:normal;color:#1b1b1b;line-height:1;white-space:pre;transform:scaleX(1.0160);transform-origin:0 0;">: Occult v.4.2025.9.10</div>
<div id="t2" style="position:absolute;left:18.00px;top:46.00px;font-family:'Liberation Sans', sans-serif;font-size:17.5px;font-weight:400;font-style:normal;color:#000;line-height:1;white-space:pre;transform:scaleX(1.0253);transform-origin:0 0;">with Plot...</div>
<div id="t3" style="position:absolute;left:122.97px;top:46.00px;font-family:'Liberation Sans', sans-serif;font-size:17.5px;font-weight:400;font-style:normal;color:#000;line-height:1;white-space:pre;transform:scaleX(1.0337);transform-origin:0 0;">Plot options...</div>
<div id="t4" style="position:absolute;left:269.97px;top:46.00px;font-family:'Liberation Sans', sans-serif;font-size:17.5px;font-weight:400;font-style:normal;color:#000;line-height:1;white-space:pre;transform:scaleX(1.0286);transform-origin:0 0;">Help</div>
<div id="t5" style="position:absolute;left:332.98px;top:46.00px;font-family:'Liberation Sans', sans-serif;font-size:17.5px;font-weight:400;font-style:normal;color:#000;line-height:1;white-space:pre;transform:scaleX(1.0226);transform-origin:0 0;">Keep form on top</div>
<div id="t6" style="position:absolute;left:499.04px;top:46.00px;font-family:'Liberation Sans', sans-serif;font-size:17.5px;font-weight:400;font-style:normal;color:#000;line-height:1;white-space:pre;transform:scaleX(0.9643);transform-origin:0 0;">Exit</div>
<div id="t7" style="position:absolute;left:434.30px;top:42.50px;font-family:'Liberation Sans', sans-serif;font-size:10.5px;font-weight:400;font-style:normal;color:#000;line-height:1;white-space:pre;transform:scaleX(0.9027);transform-origin:0 0;z-index:3;">Set 'Miss' Times</div>
<div id="t8" style="position:absolute;left:537.83px;top:41.70px;font-family:'Liberation Sans', sans-serif;font-size:13.5px;font-weight:700;font-style:normal;color:#000;line-height:1;white-space:pre;transform:scaleX(0.8684);transform-origin:0 0;z-index:3;">Editor</div>
<div id="t9" style="position:absolute;left:589.00px;top:44.50px;font-family:'Liberation Sans', sans-serif;font-size:11px;font-weight:400;font-style:normal;color:#000;line-height:1;white-space:pre;transform:scaleX(0.9425);transform-origin:0 0;">{Observer &amp; time}</div>
<div id="t10" style="position:absolute;left:781.14px;top:63.60px;font-family:'Liberation Sans', sans-serif;font-size:12px;font-weight:400;font-style:normal;color:#000;line-height:1;white-space:pre;transform:scaleX(0.8590);transform-origin:0 0;">Find best fit</div>
<div id="t11" style="position:absolute;left:833.40px;top:79.00px;font-family:'Liberation Sans', sans-serif;font-size:12px;font-weight:400;font-style:normal;color:#000;line-height:1;white-space:pre;transform:scaleX(0.8809);transform-origin:0 0;">Center X</div>
<div id="t12" style="position:absolute;left:833.40px;top:100.80px;font-family:'Liberation Sans', sans-serif;font-size:12px;font-weight:400;font-style:normal;color:#000;line-height:1;white-space:pre;transform:scaleX(0.8723);transform-origin:0 0;">Center Y</div>
<div id="t13" style="position:absolute;left:804.65px;top:128.00px;font-family:'Liberation Sans', sans-serif;font-size:12px;font-weight:400;font-style:normal;color:#000;line-height:1;white-space:pre;transform:scaleX(0.8494);transform-origin:0 0;">Major axis (km)</div>
<div id="t14" style="position:absolute;left:804.65px;top:149.70px;font-family:'Liberation Sans', sans-serif;font-size:12px;font-weight:400;font-style:normal;color:#000;line-height:1;white-space:pre;transform:scaleX(0.8494);transform-origin:0 0;">Minor axis (km)</div>
<div id="t15" style="position:absolute;left:823.70px;top:171.40px;font-family:'Liberation Sans', sans-serif;font-size:12px;font-weight:400;font-style:normal;color:#000;line-height:1;white-space:pre;transform:scaleX(0.8724);transform-origin:0 0;">Orientation</div>
<div id="t16" style="position:absolute;left:883.50px;top:76.10px;font-family:'Liberation Sans', sans-serif;font-size:13px;font-weight:400;font-style:normal;color:#000;line-height:1;white-space:pre;transform:scaleX(0.8111);transform-origin:0 0;">0.0</div>
<div id="t17" style="position:absolute;left:883.50px;top:98.10px;font-family:'Liberation Sans', sans-serif;font-size:13px;font-weight:400;font-style:normal;color:#000;line-height:1;white-space:pre;transform:scaleX(0.8111);transform-origin:0 0;">0.0</div>
<div id="t18" style="position:absolute;left:883.50px;top:125.10px;font-family:'Liberation Sans', sans-serif;font-size:13px;font-weight:400;font-style:normal;color:#000;line-height:1;white-space:pre;transform:scaleX(0.8111);transform-origin:0 0;">6.6</div>
<div id="t19" style="position:absolute;left:883.50px;top:147.10px;font-family:'Liberation Sans', sans-serif;font-size:13px;font-weight:400;font-style:normal;color:#8a8a8a;line-height:1;white-space:pre;transform:scaleX(0.8111);transform-origin:0 0;">6.6</div>
<div id="t20" style="position:absolute;left:883.50px;top:169.10px;font-family:'Liberation Sans', sans-serif;font-size:13px;font-weight:400;font-style:normal;color:#8a8a8a;line-height:1;white-space:pre;transform:scaleX(0.8111);transform-origin:0 0;">0.0</div>
<div id="t21" style="position:absolute;left:970.50px;top:78.00px;font-family:'Liberation Sans', sans-serif;font-size:12px;font-weight:400;font-style:normal;color:#000;line-height:1;white-space:pre;transform:scaleX(0.7500);transform-origin:0 0;">---</div>
<div id="t22" style="position:absolute;left:970.50px;top:100.00px;font-family:'Liberation Sans', sans-serif;font-size:12px;font-weight:400;font-style:normal;color:#000;line-height:1;white-space:pre;transform:scaleX(0.7500);transform-origin:0 0;">---</div>
<div id="t23" style="position:absolute;left:1011.51px;top:79.30px;font-family:'Liberation Sans', sans-serif;font-size:12px;font-weight:400;font-style:normal;color:#000;line-height:1;white-space:pre;transform:scaleX(0.8872);transform-origin:0 0;">Mass X</div>
<div id="t24" style="position:absolute;left:1011.51px;top:101.00px;font-family:'Liberation Sans', sans-serif;font-size:12px;font-weight:400;font-style:normal;color:#000;line-height:1;white-space:pre;transform:scaleX(0.8872);transform-origin:0 0;">Mass Y</div>
<div id="t25" style="position:absolute;left:1055.50px;top:76.10px;font-family:'Liberation Sans', sans-serif;font-size:13px;font-weight:400;font-style:normal;color:#000;line-height:1;white-space:pre;transform:scaleX(0.8111);transform-origin:0 0;">0.0</div>
<div id="t26" style="position:absolute;left:1055.50px;top:98.10px;font-family:'Liberation Sans', sans-serif;font-size:13px;font-weight:400;font-style:normal;color:#000;line-height:1;white-space:pre;transform:scaleX(0.8111);transform-origin:0 0;">0.0</div>
<div id="t27" style="position:absolute;left:1044.80px;top:117.30px;font-family:'Liberation Sans', sans-serif;font-size:8.5px;font-weight:400;font-style:normal;color:#b8b8b8;line-height:1;white-space:pre;transform:scaleX(0.8840);transform-origin:0 0;">Shape model</div>
<div id="t28" style="position:absolute;left:970.30px;top:127.00px;font-family:'Liberation Sans', sans-serif;font-size:12.5px;font-weight:400;font-style:normal;color:#000;line-height:1;white-space:pre;transform:scaleX(0.8471);transform-origin:0 0;">0.0</div>
<div id="t29" style="position:absolute;left:970.30px;top:149.00px;font-family:'Liberation Sans', sans-serif;font-size:12.5px;font-weight:400;font-style:normal;color:#b0b0b0;line-height:1;white-space:pre;transform:scaleX(0.8471);transform-origin:0 0;">0.0</div>
<div id="t30" style="position:absolute;left:970.30px;top:171.00px;font-family:'Liberation Sans', sans-serif;font-size:12.5px;font-weight:400;font-style:normal;color:#b0b0b0;line-height:1;white-space:pre;transform:scaleX(0.8471);transform-origin:0 0;">0.0</div>
<div id="t31" style="position:absolute;left:1027.00px;top:131.90px;font-family:'Liberation Sans', sans-serif;font-size:11.5px;font-weight:400;font-style:normal;color:#009000;line-height:1;white-space:pre;transform:scaleX(0.9048);transform-origin:0 0;">dia = 6.6 km</div>
<div id="t32" style="position:absolute;left:1008.00px;top:145.90px;font-family:'Liberation Sans', sans-serif;font-size:11.5px;font-weight:400;font-style:normal;color:#0000e8;line-height:1;white-space:pre;transform:scaleX(0.9321);transform-origin:0 0;">a/b: 1.00, dMag: 0.00</div>
<div id="t33" style="position:absolute;left:1011.46px;top:175.70px;font-family:'Liberation Sans', sans-serif;font-size:11.3px;font-weight:400;font-style:normal;color:#000;line-height:1;white-space:pre;transform:scaleX(0.9426);transform-origin:0 0;">Motion: 13.63 km/s</div>
<div id="t34" style="position:absolute;left:803.60px;top:198.00px;font-family:'Liberation Sans', sans-serif;font-size:12px;font-weight:400;font-style:normal;color:#000;line-height:1;white-space:pre;transform:scaleX(0.8610);transform-origin:0 0;">Circular</div>
<div id="t35" style="position:absolute;left:869.15px;top:192.80px;font-family:'Liberation Sans', sans-serif;font-size:11px;font-weight:400;font-style:normal;color:#000;line-height:1;white-space:pre;transform:scaleX(0.9470);transform-origin:0 0;">Use assumed</div>
<div id="t36" style="position:absolute;left:870.10px;top:205.30px;font-family:'Liberation Sans', sans-serif;font-size:11px;font-weight:400;font-style:normal;color:#000;line-height:1;white-space:pre;transform:scaleX(0.9310);transform-origin:0 0;">dia (6.6 km)</div>
<div id="t37" style="position:absolute;left:971.10px;top:198.00px;font-family:'Liberation Sans', sans-serif;font-size:12px;font-weight:400;font-style:normal;color:#000;line-height:1;white-space:pre;transform:scaleX(0.8981);transform-origin:0 0;">Include Miss events</div>
<div id="t38" style="position:absolute;left:791.60px;top:228.00px;font-family:'Liberation Sans', sans-serif;font-size:12px;font-weight:700;font-style:normal;color:#a8a8a8;line-height:1;white-space:pre;transform:scaleX(0.9684);transform-origin:0 0;">Double stars - show</div>
<div id="t39" style="position:absolute;left:934.05px;top:231.00px;font-family:'Liberation Sans', sans-serif;font-size:10.5px;font-weight:400;font-style:normal;color:#b0b0b0;line-height:1;white-space:pre;transform:scaleX(0.9500);transform-origin:0 0;">Both</div>
<div id="t40" style="position:absolute;left:986.11px;top:231.00px;font-family:'Liberation Sans', sans-serif;font-size:10.5px;font-weight:400;font-style:normal;color:#b0b0b0;line-height:1;white-space:pre;transform:scaleX(0.8857);transform-origin:0 0;">Primary</div>
<div id="t41" style="position:absolute;left:1052.00px;top:231.00px;font-family:'Liberation Sans', sans-serif;font-size:10.5px;font-weight:400;font-style:normal;color:#b0b0b0;line-height:1;white-space:pre;transform:scaleX(0.8720);transform-origin:0 0;">Secondary</div>
<div id="t42" style="position:absolute;left:784.00px;top:255.00px;font-family:'Liberation Sans', sans-serif;font-size:12px;font-weight:700;font-style:normal;color:#009a00;line-height:1;white-space:pre;transform:scaleX(0.9890);transform-origin:0 0;">Quality of the fit</div>
<div id="t43" style="position:absolute;left:887.70px;top:254.50px;font-family:'Liberation Sans', sans-serif;font-size:12px;font-weight:400;font-style:normal;color:#000;line-height:1;white-space:pre;transform:scaleX(0.8567);transform-origin:0 0;">Astrometry only. No reliable size</div>
<div id="t44" style="position:absolute;left:904.50px;top:276.00px;font-family:'Liberation Sans', sans-serif;font-size:12px;font-weight:400;font-style:italic;color:#000;line-height:1;white-space:pre;transform:scaleX(0.8596);transform-origin:0 0;">Flag for future review</div>
<div id="t45" style="position:absolute;left:782.70px;top:311.50px;font-family:'Liberation Sans', sans-serif;font-size:11.5px;font-weight:700;font-style:normal;color:#b00010;line-height:1;white-space:pre;">P</div>
<div id="t46" style="position:absolute;left:783.00px;top:324.80px;font-family:'Liberation Sans', sans-serif;font-size:11.5px;font-weight:700;font-style:normal;color:#b00010;line-height:1;white-space:pre;">L</div>
<div id="t47" style="position:absolute;left:781.80px;top:337.60px;font-family:'Liberation Sans', sans-serif;font-size:11.5px;font-weight:700;font-style:normal;color:#b00010;line-height:1;white-space:pre;">O</div>
<div id="t48" style="position:absolute;left:782.20px;top:350.80px;font-family:'Liberation Sans', sans-serif;font-size:11.5px;font-weight:700;font-style:normal;color:#b00010;line-height:1;white-space:pre;">T</div>
<div id="t49" style="position:absolute;left:802.40px;top:306.90px;font-family:'Liberation Sans', sans-serif;font-size:12px;font-weight:700;font-style:normal;color:#a00028;line-height:1;white-space:pre;transform:scaleX(1.0161);transform-origin:0 0;">Scale</div>
<div id="t50" style="position:absolute;left:802.40px;top:332.50px;font-family:'Liberation Sans', sans-serif;font-size:12px;font-weight:700;font-style:normal;color:#a00028;line-height:1;white-space:pre;transform:scaleX(0.9708);transform-origin:0 0;">Size</div>
<div id="t51" style="position:absolute;left:859.56px;top:334.00px;font-family:'Liberation Sans', sans-serif;font-size:12px;font-weight:700;font-style:normal;color:#a00028;line-height:1;white-space:pre;transform:scaleX(0.9436);transform-origin:0 0;">normal</div>
<div id="t52" style="position:absolute;left:924.50px;top:334.00px;font-family:'Liberation Sans', sans-serif;font-size:12px;font-weight:700;font-style:normal;color:#a00028;line-height:1;white-space:pre;transform:scaleX(1.0412);transform-origin:0 0;">x 2</div>
<div id="t53" style="position:absolute;left:968.50px;top:334.00px;font-family:'Liberation Sans', sans-serif;font-size:12px;font-weight:700;font-style:normal;color:#a00028;line-height:1;white-space:pre;transform:scaleX(1.0529);transform-origin:0 0;">x 5</div>
<div id="t54" style="position:absolute;left:1017.70px;top:334.00px;font-family:'Liberation Sans', sans-serif;font-size:12px;font-weight:700;font-style:normal;color:#d000c8;line-height:1;white-space:pre;transform:scaleX(0.9382);transform-origin:0 0;">Form opacity</div>
<div id="t55" style="position:absolute;left:803.60px;top:358.50px;font-family:'Liberation Sans', sans-serif;font-size:12px;font-weight:700;font-style:normal;color:#d40000;line-height:1;white-space:pre;transform:scaleX(0.9942);transform-origin:0 0;">Scroll range x1.25</div>
<div id="t56" style="position:absolute;left:787.51px;top:388.00px;font-family:'Liberation Sans', sans-serif;font-size:12px;font-weight:400;font-style:normal;color:#000;line-height:1;white-space:pre;transform:scaleX(0.8889);transform-origin:0 0;">RMS fit -1.0 ±0.0 km</div>
<div id="t57" style="position:absolute;left:875.10px;top:412.00px;font-family:'Liberation Mono', monospace;font-size:12.5px;font-weight:400;font-style:normal;color:#111;line-height:1;white-space:pre;transform:scaleX(1.0969);transform-origin:0 0;">1    P Maley, near Buckeye</div>
<div id="t58" style="position:absolute;left:875.09px;top:424.00px;font-family:'Liberation Mono', monospace;font-size:12.5px;font-weight:400;font-style:normal;color:#111;line-height:1;white-space:pre;transform:scaleX(1.1117);transform-origin:0 0;">2(P) Predicted</div>
<div id="t59" style="position:absolute;left:8.50px;top:68.10px;font-family:'Liberation Sans', sans-serif;font-size:13px;font-weight:700;font-style:normal;color:#fff;line-height:1;white-space:pre;transform:scaleX(1.1309);transform-origin:0 0;word-spacing:-1px;">(38517) 1999 TL249  2025 Feb 3   6.6 km</div>
<div id="t60" style="position:absolute;left:8.50px;top:84.20px;font-family:'Liberation Sans', sans-serif;font-size:13px;font-weight:700;font-style:normal;color:#fff;line-height:1;white-space:pre;transform:scaleX(1.1174);transform-origin:0 0;word-spacing:-1px;">Geocentric  X  -5129.9 ±0.1  Y 3262.0 ±0.3 km</div>
<div id="t61" style="position:absolute;left:373.38px;top:81.20px;font-family:'Liberation Sans', sans-serif;font-size:23px;font-weight:700;font-style:normal;color:#fff;line-height:1;white-space:pre;transform:scaleX(1.2214);transform-origin:0 0;">N</div>
<div id="t62" style="position:absolute;left:11.78px;top:435.00px;font-family:'Liberation Sans', sans-serif;font-size:23px;font-weight:400;font-style:normal;color:#fff;line-height:1;white-space:pre;transform:scaleX(1.1615);transform-origin:0 0;">E</div>
<div id="t63" style="position:absolute;left:505.30px;top:415.80px;font-family:'Liberation Sans', sans-serif;font-size:10px;font-weight:400;font-style:normal;color:#fff;line-height:1;white-space:pre;">1</div>
<div id="t64" style="position:absolute;left:256.70px;top:469.80px;font-family:'Liberation Sans', sans-serif;font-size:10px;font-weight:400;font-style:normal;color:#fff;line-height:1;white-space:pre;">1</div>
<div id="t65" style="position:absolute;left:31.20px;top:764.70px;font-family:'Liberation Serif', serif;font-size:14.7px;font-weight:400;font-style:normal;color:#fff;line-height:1;white-space:pre;transform:scaleX(1.0467);transform-origin:0 0;">Disappear</div>
<div id="t66" style="position:absolute;left:31.20px;top:778.70px;font-family:'Liberation Serif', serif;font-size:14.7px;font-weight:400;font-style:normal;color:#fff;line-height:1;white-space:pre;transform:scaleX(1.0411);transform-origin:0 0;">Reappear</div>
<div id="t67" style="position:absolute;left:12.10px;top:798.70px;font-family:'Liberation Serif', serif;font-size:10.5px;font-weight:400;font-style:normal;color:#fff;line-height:1;white-space:pre;transform:scaleX(0.9175);transform-origin:0 0;">Occult 4.2025.9.10</div>
<div id="t68" style="position:absolute;left:361.50px;top:798.00px;font-family:'Liberation Serif', serif;font-size:12.5px;font-weight:400;font-style:italic;color:#fff;line-height:1;white-space:pre;transform:scaleX(0.9538);transform-origin:0 0;">6.00 km</div>
<div id="t69" style="position:absolute;left:646.74px;top:798.50px;font-family:'Liberation Serif', serif;font-size:12.5px;font-weight:400;font-style:normal;color:#fff;line-height:1;white-space:pre;transform:scaleX(0.9573);transform-origin:0 0;">Plot width: 13 km</div>
</body></html>
